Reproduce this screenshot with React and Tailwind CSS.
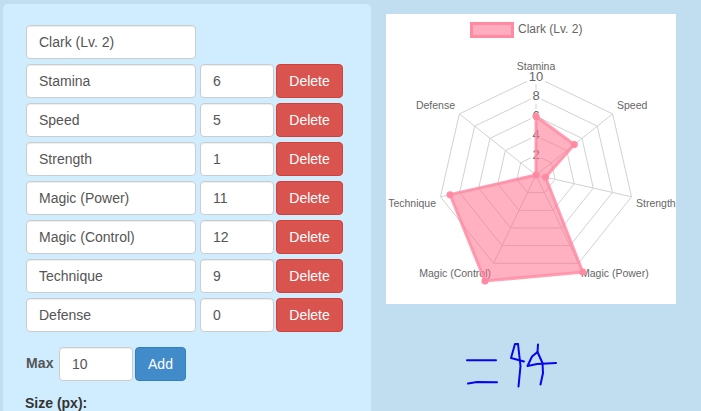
const stats = [
  ["Stamina", 6],
  ["Speed", 5],
  ["Strength", 1],
  ["Magic (Power)", 11],
  ["Magic (Control)", 12],
  ["Technique", 9],
  ["Defense", 0],
];

const labels = [
  { text: "Stamina", x: 150, y: 56, anchor: "middle" },
  { text: "Speed", x: 231, y: 95, anchor: "start" },
  { text: "Strength", x: 250, y: 193, anchor: "start" },
  { text: "Magic (Power)", x: 195, y: 263, anchor: "start" },
  { text: "Magic (Control)", x: 105, y: 263, anchor: "end" },
  { text: "Technique", x: 50, y: 193, anchor: "end" },
  { text: "Defense", x: 69, y: 95, anchor: "end" },
];

const cx = 150;
const cy = 161;
const unit = 9.8;

function point(i, value) {
  const a = -Math.PI / 2 + (i * 2 * Math.PI) / 7;
  return [cx + Math.cos(a) * value * unit, cy + Math.sin(a) * value * unit];
}

function ring(value) {
  return stats.map((_, i) => point(i, value).join(",")).join(" ");
}

function RadarChart() {
  return (
    <svg width="290" height="290" viewBox="0 0 290 290" className="block bg-white font-['Liberation_Sans',Arial,sans-serif]">
      <rect x="85.5" y="9.5" width="41" height="13" fill="#ffadbe" stroke="#ff8aa2" strokeWidth="3" />
      <text x="132" y="19" fontSize="12" fill="#666">Clark (Lv. 2)</text>

      {[2, 4, 6, 8, 10].map((v) => (
        <polygon key={v} points={ring(v)} fill="none" stroke="#d2d2d2" />
      ))}
      {stats.map((_, i) => {
        const [x, y] = point(i, 10);
        return <line key={i} x1={cx} y1={cy} x2={x} y2={y} stroke="#d2d2d2" />;
      })}
      {[2, 4, 6, 8, 10].map((v) => {
        const w = v === 10 ? 18 : 10;
        return (
          <g key={v}>
            <rect x={cx - w / 2} y={cy - v * unit - 7} width={w} height="14" fill="#fff" />
            <text x={cx} y={cy - v * unit + 3.5} fontSize="13" textAnchor="middle" fill="#666">{v}</text>
          </g>
        );
      })}

      {labels.map((l) => (
        <text key={l.text} x={l.x} y={l.y} fontSize="10.5" textAnchor={l.anchor} fill="#666">{l.text}</text>
      ))}

      <polygon
        points={stats.map((s, i) => point(i, s[1]).join(",")).join(" ")}
        fill="#ff6384"
        fillOpacity="0.5"
        stroke="#ff8aa2"
        strokeOpacity="0.8"
        strokeWidth="3"
      />
      {stats.map((s, i) => {
        const [x, y] = point(i, s[1]);
        return <circle key={s[0]} cx={x} cy={y} r="3.5" fill="#ff8aa2" />;
      })}
    </svg>
  );
}

function Field({ value, className }) {
  return (
    <input
      defaultValue={value}
      className={`h-[34px] rounded border border-[#ccc] bg-white px-[12px] text-sm text-[#555] shadow-[inset_0_1px_1px_rgba(0,0,0,0.075)] ${className}`}
    />
  );
}

export default function App() {
  return (
    <div className="flex h-[411px] w-[701px] overflow-hidden bg-[#c0deef] font-['Liberation_Sans',Arial,sans-serif]">
      <div className="ml-[3px] mt-[4px] h-[420px] w-[368px] shrink-0 rounded-[5px] bg-[#d0edff] pl-[23px] pt-[21px]">
        <Field value="Clark (Lv. 2)" className="block w-[170px]" />
        {stats.map((s) => (
          <div key={s[0]} className="mt-[5px] flex items-center">
            <Field value={s[0]} className="w-[170px]" />
            <Field value={s[1]} className="ml-[4px] w-[74px]" />
            <button className="ml-[2px] h-[34px] w-[67px] rounded border border-[#d43f3a] bg-[#d9534f] text-sm text-white">
              Delete
            </button>
          </div>
        ))}
        <div className="mt-[15px] flex items-center">
          <span className="mb-[2px] w-[33px] text-sm font-bold tracking-[0.2px] text-[#555]">Max</span>
          <Field value="10" className="w-[74px]" />
          <button className="ml-[2px] h-[34px] w-[51px] rounded border border-[#357ebd] bg-[#428bca] text-sm text-white">
            Add
          </button>
        </div>
        <div className="ml-[-1px] mt-[12px] text-sm font-bold text-[#333]">Size (px):</div>
      </div>

      <div className="ml-[15px] mt-[14px]">
        <RadarChart />
        <svg width="120" height="70" viewBox="0 0 120 70" className="ml-[64px] mt-[26px] block" fill="none" stroke="#0505f0" strokeWidth="2" strokeLinecap="round" strokeLinejoin="round">
          <path d="M17 30.3 H46" />
          <path d="M18 53.5 L27 52 L47 52.3" />
          <path d="M68 14 L65 14 L61 28 L74 31.5" />
          <path d="M68 14 L70.5 36 L68.5 56.5" />
          <path d="M88 14.5 L87.5 22 L82 26.5 L77.5 36 L87 34 L106 33" />
          <path d="M87.5 22 L92.5 33 L93 43 L90.5 54.5" />
        </svg>
      </div>
    </div>
  );
}
